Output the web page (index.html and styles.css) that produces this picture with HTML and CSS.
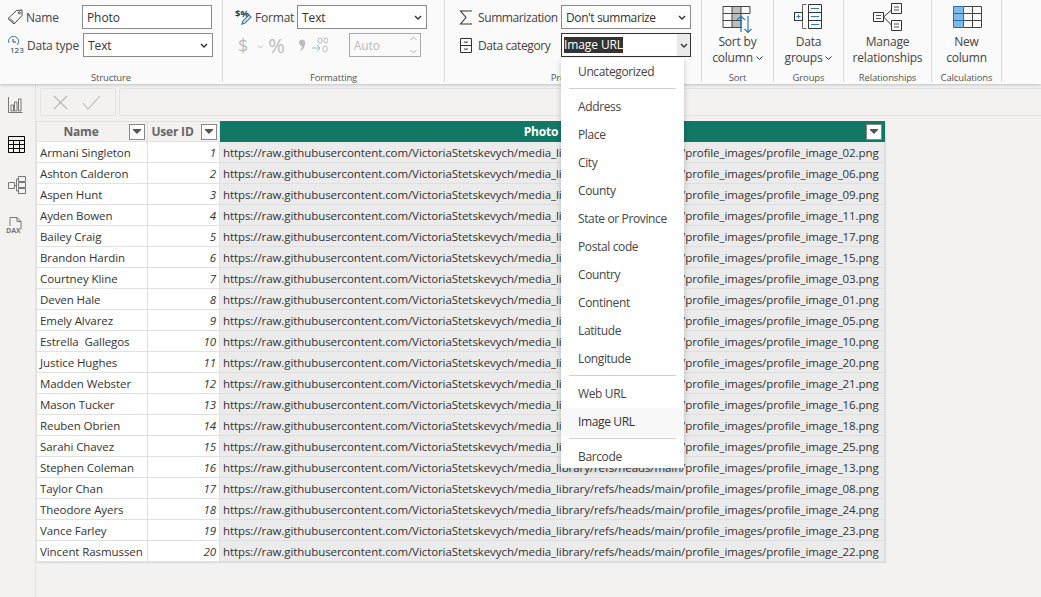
FILE: index.html
```html
<!DOCTYPE html>

<html>

<head>
    <title>Data view</title>
    <meta charset="utf-8">

    <link rel="stylesheet" href="styles.css">
</head>

<body>
    <header class="ribbon">
        <section class="group group-structure">
            <div class="group-body">
                <div class="field">
                    <svg class="field-icon" width="16" height="16" viewBox="0 0 16 16"><path d="M1 9.5 9.5 1.5 15 1v5.5L7 15z M3 9.5l4 4" fill="none" stroke="#444" /><circle cx="12.3" cy="3.8" r="1" fill="none" stroke="#444" /></svg>
                    <span class="field-label label-structure">Name</span>
                    <div class="box">Photo</div>
                </div>
                <div class="field">
                    <svg class="field-icon" width="17" height="18" viewBox="0 0 17 18"><path d="M2 7a5 5 0 1 1 8 2" fill="none" stroke="#2b7cb8" /><path d="M6 3v3h3" fill="none" stroke="#444" /><text x="3" y="17" class="icon-digits">123</text></svg>
                    <span class="field-label label-structure">Data type</span>
                    <div class="box">Text<svg class="chev" width="8" height="5" viewBox="0 0 8 5"><path d="M1 1l3 3 3-3" fill="none" stroke="#333" stroke-width="1.4" /></svg></div>
                </div>
            </div>
            <div class="group-name">Structure</div>
        </section>

        <section class="group group-formatting">
            <div class="group-body">
                <div class="field">
                    <svg class="field-icon" width="17" height="18" viewBox="0 0 17 18"><text x="0" y="9" class="icon-format">$%</text><path d="M7 16l1-3 6-6 2 2-6 6z" fill="#fff" stroke="#2b7cb8" stroke-width="1.2" /></svg>
                    <span class="field-label label-format">Format</span>
                    <div class="box">Text<svg class="chev" width="8" height="5" viewBox="0 0 8 5"><path d="M1 1l3 3 3-3" fill="none" stroke="#333" stroke-width="1.4" /></svg></div>
                </div>
                <div class="field number-tools">
                    <span class="glyph glyph-dollar">$</span>
                    <svg class="glyph-chev" width="7" height="4" viewBox="0 0 7 4"><path d="M1 .5l2.5 2.5L6 .5" fill="none" stroke="#bbb" /></svg>
                    <span class="glyph glyph-percent">%</span>
                    <svg class="glyph-comma" width="8" height="13" viewBox="0 0 8 13"><path d="M1 3a3 3 0 1 1 6 1c0 4-2 7-5 8 1-2 2-3 2-5-2 0-3-2-3-4z" fill="#bbb" /></svg>
                    <svg class="glyph-dec" width="16" height="16" viewBox="0 0 16 16"><path d="M0 11h8M5 8l3 3-3 3" fill="none" stroke="#8fc3e6" /><rect x="6" y="1" width="4" height="5" rx="2" fill="none" stroke="#bbb" /><rect x="12" y="1" width="4" height="5" rx="2" fill="none" stroke="#bbb" /><rect x="11" y="9" width="4" height="6" rx="2" fill="none" stroke="#bbb" /></svg>
                    <div class="box box-auto">Auto
                        <svg class="spin" width="7" height="18" viewBox="0 0 7 18"><path d="M.5 4 3.500 1l3 3M.5 14l3 3 3-3" fill="none" stroke="#aaa" /></svg>
                    </div>
                </div>
            </div>
            <div class="group-name">Formatting</div>
        </section>

        <section class="group group-properties">
            <div class="group-body">
                <div class="field">
                    <svg class="field-icon" width="14" height="15" viewBox="0 0 14 15"><path d="M13 1H1.500L7 7.500 1.500 14H13" fill="none" stroke="#333" stroke-width="1.100" /></svg>
                    <span class="field-label label-properties">Summarization</span>
                    <div class="box box-summarize">Don't summarize<svg class="chev" width="8" height="5" viewBox="0 0 8 5"><path d="M1 1l3 3 3-3" fill="none" stroke="#333" stroke-width="1.4" /></svg></div>
                </div>
                <div class="field">
                    <svg class="field-icon" width="14" height="15" viewBox="0 0 14 15"><path d="M1.500.5h11v14h-11zM1.500 7.500h11M5 3.500c0 1 4 1 4 0M5 10.500c0 1 4 1 4 0" fill="none" stroke="#333" /></svg>
                    <span class="field-label label-properties">Data category</span>
                    <div class="box box-active"><span class="selected-text">Image URL</span><span class="drop-btn"><svg width="8" height="5" viewBox="0 0 8 5"><path d="M1 1l3 3 3-3" fill="none" stroke="#333" stroke-width="1.4" /></svg></span></div>
                </div>
            </div>
            <div class="group-name">Properties</div>
        </section>

        <section class="group group-sort">
            <svg class="big-icon" width="32" height="32" viewBox="0 0 32 32">
                <rect x="10" y="4.500" width="9" height="21" fill="#bdbdbd" />
                <path d="M1 4.500h27M1 11.500h27M1 18.500h19M1 25.500h19M1 4.500v21M10 4.500v21M19 4.500v21M28 4.500v7" fill="none" stroke="#444" />
                <path d="M19 30V14M15 18l4-4 4 4" fill="none" stroke="#2b7cb8" stroke-width="1.200" />
                <path d="M26 14v17M22.500 27l3.500 3.500 3.500-3.500" fill="none" stroke="#2b7cb8" stroke-width="1.200" />
            </svg>
            <div class="big-label">Sort by<br>column<svg class="big-chev" width="7" height="4" viewBox="0 0 7 4"><path d="M.5.500l3 3 3-3" fill="none" stroke="#333" /></svg></div>
            <div class="group-name">Sort</div>
        </section>

        <section class="group group-groups">
            <svg class="big-icon" width="32" height="32" viewBox="0 0 32 32">
                <path d="M13.500 2.500h-4v24h4" fill="none" stroke="#666" />
                <rect x="1.500" y="10.500" width="8" height="8" fill="#fff" stroke="#333" />
                <path d="M3.500 14.500h4M5.500 12.500v4" stroke="#2b7cb8" />
                <path d="M15.500 2.500h13v24h-13zM15.500 10.500h13M15.500 18.500h13" fill="none" stroke="#333" />
                <path d="M18 6.500h8M18 14.500h8M18 22.500h8" stroke="#2b7cb8" stroke-width="1.200" />
            </svg>
            <div class="big-label">Data<br>groups<svg class="big-chev" width="7" height="4" viewBox="0 0 7 4"><path d="M.5.500l3 3 3-3" fill="none" stroke="#333" /></svg></div>
            <div class="group-name">Groups</div>
        </section>

        <section class="group group-relationships">
            <svg class="big-icon" width="32" height="32" viewBox="0 0 32 32">
                <path d="M1.500 10.500h10v9h-10zM19.500 1.500h10v10h-10zM19.500 18.500h10v10h-10z" fill="none" stroke="#333" />
                <path d="M11.500 15l8-7M11.500 15l8 8" fill="none" stroke="#333" />
                <path d="M4 13.500h5M4 16.500h5M22 5h5M22 8h5M22 22h5M22 25h5" stroke="#555" />
            </svg>
            <div class="big-label">Manage<br>relationships</div>
            <div class="group-name">Relationships</div>
        </section>

        <section class="group group-calc">
            <svg class="big-icon" width="32" height="32" viewBox="0 0 32 32">
                <rect x="3" y="4.500" width="9" height="21" fill="#7fbbe8" />
                <path d="M12.500 4.500h18v21h-18M21.500 4.500v21M12.500 11.500h18M12.500 18.500h18" fill="none" stroke="#444" />
                <path d="M2.500 4.500h10v21h-10zM2.500 11.500h10M2.500 18.500h10" fill="none" stroke="#1f6fb5" />
            </svg>
            <div class="big-label">New<br>column</div>
            <div class="group-name">Calculations</div>
        </section>
    </header>

    <div class="workspace">
        <nav class="sidebar">
            <svg width="15" height="16" viewBox="0 0 15 16"><path d="M.5 0v15.500h14M3 14V8h2.500v6zM6.500 14V5H9v9zM10.500 14V2H13v12z" fill="none" stroke="#777" /></svg>
            <svg width="17" height="17" viewBox="0 0 17 17"><path d="M.5.500h16v16H.5zM.5 4.500h16M.5 8.500h16M.5 12.500h16M5.500 4.500v12M11.500 4.500v12" fill="none" stroke="#000" /></svg>
            <svg width="18" height="18" viewBox="0 0 18 18"><path d="M.5 6.500h6v6h-6zM10.500 .5h7v5h-7zM10.500 6.500h7v5h-7zM10.500 12.500h7v5h-7zM6.500 9.500h2M8.500 3v12M8.500 3h2M8.500 15h2" fill="none" stroke="#777" /></svg>
            <svg class="dax-icon" width="18" height="17" viewBox="0 0 18 17"><path d="M4 9V.5h7l4 4V12M11 .5v4h4" fill="none" stroke="#777" /><text x="0" y="16" class="icon-dax">DAX</text></svg>
        </nav>

        <main class="content">
            <div class="formula-bar">
                <div class="formula-actions">
                    <svg width="15" height="15" viewBox="0 0 15 15"><path d="M1 1l13 13M14 1 1 14" stroke="#b5b5b5" stroke-width="1.100" /></svg>
                    <svg width="19" height="15" viewBox="0 0 19 15"><path d="M1 8l5 6L18 1" fill="none" stroke="#b5b5b5" stroke-width="1.100" /></svg>
                </div>
                <div class="formula-input"></div>
            </div>

            <table class="data-table">
                <colgroup>
                    <col class="col-name">
                    <col class="col-id">
                    <col class="col-photo">
                </colgroup>
                <thead>
                    <tr>
                        <th><div class="th-inner">Name<span class="filter"></span></div></th>
                        <th><div class="th-inner">User ID<span class="filter"></span></div></th>
                        <th class="th-photo"><div class="th-inner">Photo<span class="filter"></span></div></th>
                    </tr>
                </thead>
                <tbody>
                    <tr><td>Armani Singleton</td><td class="num">1</td><td class="url">https://raw.githubusercontent.com/VictoriaStetskevych/media_library/refs/heads/main/profile_images/profile_image_02.png</td></tr>
                    <tr><td>Ashton Calderon</td><td class="num">2</td><td class="url">https://raw.githubusercontent.com/VictoriaStetskevych/media_library/refs/heads/main/profile_images/profile_image_06.png</td></tr>
                    <tr><td>Aspen Hunt</td><td class="num">3</td><td class="url">https://raw.githubusercontent.com/VictoriaStetskevych/media_library/refs/heads/main/profile_images/profile_image_09.png</td></tr>
                    <tr><td>Ayden Bowen</td><td class="num">4</td><td class="url">https://raw.githubusercontent.com/VictoriaStetskevych/media_library/refs/heads/main/profile_images/profile_image_11.png</td></tr>
                    <tr><td>Bailey Craig</td><td class="num">5</td><td class="url">https://raw.githubusercontent.com/VictoriaStetskevych/media_library/refs/heads/main/profile_images/profile_image_17.png</td></tr>
                    <tr><td>Brandon Hardin</td><td class="num">6</td><td class="url">https://raw.githubusercontent.com/VictoriaStetskevych/media_library/refs/heads/main/profile_images/profile_image_15.png</td></tr>
                    <tr><td>Courtney Kline</td><td class="num">7</td><td class="url">https://raw.githubusercontent.com/VictoriaStetskevych/media_library/refs/heads/main/profile_images/profile_image_03.png</td></tr>
                    <tr><td>Deven Hale</td><td class="num">8</td><td class="url">https://raw.githubusercontent.com/VictoriaStetskevych/media_library/refs/heads/main/profile_images/profile_image_01.png</td></tr>
                    <tr><td>Emely Alvarez</td><td class="num">9</td><td class="url">https://raw.githubusercontent.com/VictoriaStetskevych/media_library/refs/heads/main/profile_images/profile_image_05.png</td></tr>
                    <tr><td>Estrella  Gallegos</td><td class="num">10</td><td class="url">https://raw.githubusercontent.com/VictoriaStetskevych/media_library/refs/heads/main/profile_images/profile_image_10.png</td></tr>
                    <tr><td>Justice Hughes</td><td class="num">11</td><td class="url">https://raw.githubusercontent.com/VictoriaStetskevych/media_library/refs/heads/main/profile_images/profile_image_20.png</td></tr>
                    <tr><td>Madden Webster</td><td class="num">12</td><td class="url">https://raw.githubusercontent.com/VictoriaStetskevych/media_library/refs/heads/main/profile_images/profile_image_21.png</td></tr>
                    <tr><td>Mason Tucker</td><td class="num">13</td><td class="url">https://raw.githubusercontent.com/VictoriaStetskevych/media_library/refs/heads/main/profile_images/profile_image_16.png</td></tr>
                    <tr><td>Reuben Obrien</td><td class="num">14</td><td class="url">https://raw.githubusercontent.com/VictoriaStetskevych/media_library/refs/heads/main/profile_images/profile_image_18.png</td></tr>
                    <tr><td>Sarahi Chavez</td><td class="num">15</td><td class="url">https://raw.githubusercontent.com/VictoriaStetskevych/media_library/refs/heads/main/profile_images/profile_image_25.png</td></tr>
                    <tr><td>Stephen Coleman</td><td class="num">16</td><td class="url">https://raw.githubusercontent.com/VictoriaStetskevych/media_library/refs/heads/main/profile_images/profile_image_13.png</td></tr>
                    <tr><td>Taylor Chan</td><td class="num">17</td><td class="url">https://raw.githubusercontent.com/VictoriaStetskevych/media_library/refs/heads/main/profile_images/profile_image_08.png</td></tr>
                    <tr><td>Theodore Ayers</td><td class="num">18</td><td class="url">https://raw.githubusercontent.com/VictoriaStetskevych/media_library/refs/heads/main/profile_images/profile_image_24.png</td></tr>
                    <tr><td>Vance Farley</td><td class="num">19</td><td class="url">https://raw.githubusercontent.com/VictoriaStetskevych/media_library/refs/heads/main/profile_images/profile_image_23.png</td></tr>
                    <tr><td>Vincent Rasmussen</td><td class="num">20</td><td class="url">https://raw.githubusercontent.com/VictoriaStetskevych/media_library/refs/heads/main/profile_images/profile_image_22.png</td></tr>
                </tbody>
            </table>
        </main>
    </div>

    <ul class="menu">
        <li>Uncategorized</li>
        <li class="sep"></li>
        <li>Address</li>
        <li>Place</li>
        <li>City</li>
        <li>County</li>
        <li>State or Province</li>
        <li>Postal code</li>
        <li>Country</li>
        <li>Continent</li>
        <li>Latitude</li>
        <li>Longitude</li>
        <li class="sep"></li>
        <li>Web URL</li>
        <li class="current">Image URL</li>
        <li class="sep"></li>
        <li>Barcode</li>
    </ul>
</body>

</html>
```
FILE: styles.css
```css
body {
    margin: 0;
    height: 597px;
    overflow: hidden;
    background: #f3f2f1;
    color: #333;
    font: 12px "Open Sans", "Noto Sans", sans-serif;
    position: relative;
}

/* ribbon */
.ribbon {
    display: flex;
    height: 84px;
    background: #fafafa;
    box-shadow: 0 1px 3px rgba(0, 0, 0, 0.22);
    position: relative;
}

.group {
    box-sizing: border-box;
    height: 82px;
    border-right: 1px solid #d9d9d9;
    display: flex;
    flex-direction: column;
    align-items: center;
    flex: none;
    position: relative;
}

.group-structure { width: 223px; }
.group-formatting { width: 222px; }
.group-properties { width: 257px; }
.group-sort { width: 72px; }
.group-groups { width: 70px; }
.group-relationships { width: 88px; }
.group-calc { width: 70px; }

.group-body {
    display: flex;
    flex-direction: column;
    gap: 4px;
    padding-top: 5px;
    width: 100%;
}

.group-name {
    position: absolute;
    left: 0;
    right: 0;
    top: 71px;
    text-align: center;
    font-size: 9.500px;
    line-height: 14px;
    color: #555;
    letter-spacing: -0.15px;
}

.field {
    display: flex;
    align-items: center;
    height: 24px;
}

.field-icon {
    flex: none;
    margin-left: 7px;
}

.group-formatting .field-icon { margin-left: 12px; }
.group-properties .field-icon { margin-left: 14px; }

.field-label {
    color: #444;
    letter-spacing: -0.2px;
    white-space: nowrap;
    flex: none;
}

.label-structure {
    width: 56px;
    margin-left: 3px;
}

.label-format {
    width: 42px;
    margin-left: 3px;
}

.label-properties {
    width: 83px;
    margin-left: 5px;
    letter-spacing: -0.4px;
}

.box {
    box-sizing: border-box;
    width: 130px;
    height: 24px;
    border: 1px solid #8a8a8a;
    background: #fff;
    line-height: 23px;
    padding-left: 4px;
    position: relative;
    color: #333;
    letter-spacing: -0.1px;
    white-space: nowrap;
}

.box-summarize {
    letter-spacing: -0.4px;
}

.chev {
    position: absolute;
    right: 4px;
    top: 9px;
}

.box-active {
    border-color: #333;
    padding-left: 2px;
}

.selected-text {
    background: #333;
    color: #fff;
    display: inline-block;
    line-height: 16px;
    margin-top: 3px;
    vertical-align: top;
}

.drop-btn {
    position: absolute;
    right: 0;
    top: 0;
    bottom: 0;
    width: 13px;
    background: #eaeaea;
    display: flex;
    align-items: center;
    justify-content: center;
}

/* disabled number tools */
.number-tools {
    position: relative;
}

.glyph {
    color: #bbb;
    flex: none;
}

.glyph-dollar {
    font-size: 18px;
    margin-left: 15px;
}

.glyph-chev {
    margin-left: 9px;
    margin-top: 3px;
}

.glyph-percent {
    font-size: 20px;
    margin-left: 4px;
}

.glyph-comma {
    margin-left: 13px;
    flex: none;
}

.glyph-dec {
    margin-left: 6px;
    flex: none;
}

.box-auto {
    width: 72px;
    margin-left: 21px;
    color: #bbb;
    padding-left: 4px;
    border-color: #aaa;
    background: #fafafa;
}

.spin {
    position: absolute;
    right: 3px;
    top: 2px;
}

.big-icon {
    margin-top: 2px;
    flex: none;
}

.big-label {
    text-align: center;
    line-height: 16px;
    color: #444;
    margin-top: 0;
    white-space: nowrap;
    letter-spacing: -0.2px;
}

.big-chev {
    margin-left: 3px;
    vertical-align: 2px;
}

.icon-digits {
    font: 8px "Open Sans", sans-serif;
    fill: #333;
}

.icon-format {
    font: bold 9.500px "Open Sans", sans-serif;
    fill: #333;
}

.icon-dax {
    font: bold 7px "Open Sans", sans-serif;
    fill: #777;
}

/* main area */
.workspace {
    display: flex;
    height: 513px;
}

.sidebar {
    box-sizing: border-box;
    width: 36px;
    flex: none;
    border-right: 1px solid #e3e3e3;
    display: flex;
    flex-direction: column;
    align-items: flex-start;
    gap: 23px;
    padding: 13px 0 0 8px;
}

.dax-icon {
    margin-left: -2px;
}

.content {
    flex: 1;
    min-width: 0;
}

.formula-bar {
    display: flex;
    gap: 3px;
    height: 37px;
    box-sizing: border-box;
    padding: 4px 0 5px 4px;
}

.formula-actions {
    box-sizing: border-box;
    width: 76px;
    border: 1px solid #e3e3e3;
    border-radius: 2px;
    display: flex;
    align-items: center;
    gap: 14px;
    padding-left: 12px;
}

.formula-input {
    flex: 1;
    border: 1px solid #e3e3e3;
    border-right: 0;
    border-radius: 2px 0 0 2px;
}

/* table */
.data-table {
    border-collapse: collapse;
    table-layout: fixed;
    width: 849px;
    box-shadow: 1px 1px 1px #ddd;
}

.col-name { width: 111px; }
.col-id { width: 72px; }

.data-table th,
.data-table td {
    box-sizing: border-box;
    height: 21px;
    padding: 0 3px;
    border: 1px solid #e1e1e1;
    white-space: pre;
    overflow: hidden;
    line-height: 19px;
    letter-spacing: -0.08px;
}

.data-table td {
    background: #fff;
    color: #333;
    font-size: 11.500px;
}

.data-table td.num {
    text-align: right;
    font-style: italic;
    padding-right: 3px;
}

.data-table td.url {
    background: #ebebeb;
    border-color: #dfdfdf;
    padding-left: 3px;
}

.data-table th {
    height: 20px;
    line-height: 18px;
    background: #f3f2f1;
    color: #666;
    font-weight: 700;
    padding: 0;
    letter-spacing: -0.2px;
}

.data-table th.th-photo {
    background: #117865;
    color: #fff;
    border-color: #117865;
}

.th-inner {
    position: relative;
    text-align: center;
    padding-right: 22px;
}

.filter {
    position: absolute;
    right: 2px;
    top: 1px;
    box-sizing: border-box;
    width: 16px;
    height: 16px;
    background: #fff;
    border: 1px solid #888;
}

.filter::before {
    content: "";
    position: absolute;
    left: 3px;
    top: 4px;
    width: 8px;
    height: 1px;
    background: #555;
}

.filter::after {
    content: "";
    position: absolute;
    left: 3px;
    top: 5px;
    border: 4px solid transparent;
    border-top: 4px solid #555;
}

/* dropdown list */
.menu {
    position: absolute;
    left: 561px;
    top: 58px;
    width: 123px;
    height: 410px;
    box-sizing: border-box;
    margin: 0;
    padding: 0;
    list-style: none;
    background: #fff;
    box-shadow: 0 2px 6px rgba(0, 0, 0, 0.2);
    color: #444;
    letter-spacing: -0.37px;
}

.menu li {
    height: 28px;
    line-height: 28px;
    padding-left: 17px;
    white-space: nowrap;
}

.menu li.sep {
    height: 1px;
    margin: 2px 8px 4px;
    padding: 0;
    background: #d2d0ce;
}

.menu li.current {
    background: #f8f8f8;
    color: #333;
}
```
